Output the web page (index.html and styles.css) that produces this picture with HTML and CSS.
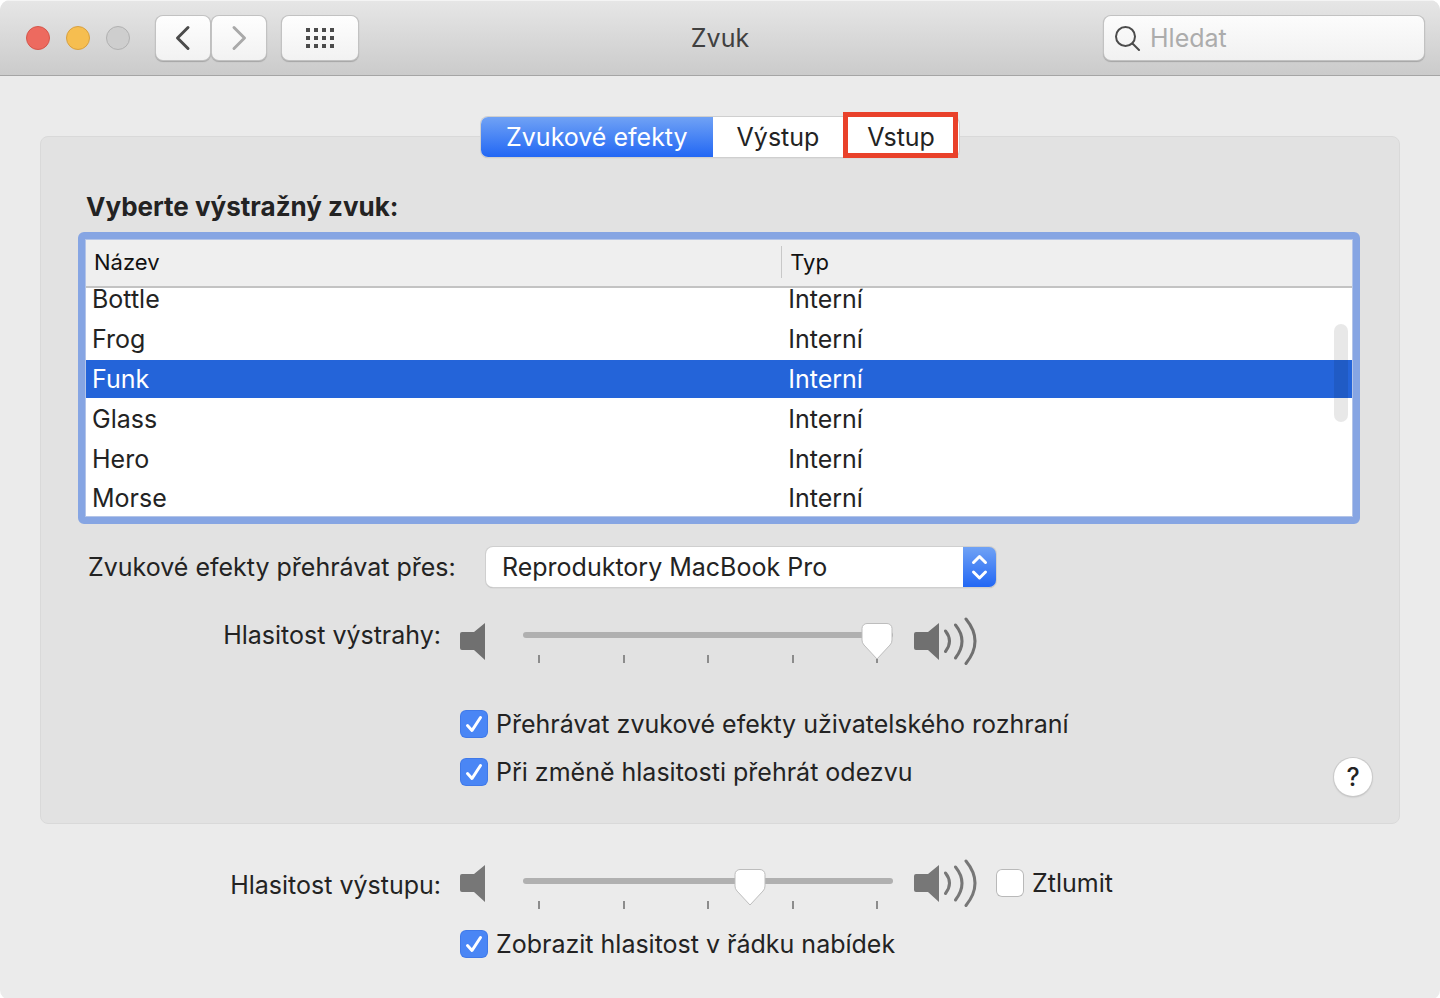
FILE: index.html
```html
<!DOCTYPE html>
<html lang="cs">
<head>
    <meta charset="UTF-8">
    <meta name="viewport" content="width=device-width, initial-scale=1.0">
    <title>Zvuk</title>
    <link rel="stylesheet" href="styles.css">
</head>
<body>

    <div class="window">
        <header class="toolbar">
            <div class="toolbar-left">
                <div class="lights">
                    <button type="button" class="light red" aria-label="Zavřít"></button>
                    <button type="button" class="light yellow" aria-label="Minimalizovat"></button>
                    <button type="button" class="light" aria-label="Zvětšit" disabled></button>
                </div>
                <div class="nav">
                    <button type="button" class="tool" aria-label="Zpět">
                        <svg width="16" height="26" viewBox="0 0 16 26" fill="none" stroke="#4b4b4b" stroke-width="3" stroke-linecap="round" stroke-linejoin="round"><path d="M13 2.5 2.5 13 13 23.5"/></svg>
                    </button>
                    <button type="button" class="tool" aria-label="Vpřed">
                        <svg width="16" height="26" viewBox="0 0 16 26" fill="none" stroke="#a9a9a9" stroke-width="3" stroke-linecap="round" stroke-linejoin="round"><path d="M3 2.5 13.5 13 3 23.5"/></svg>
                    </button>
                </div>
                <button type="button" class="tool wide" aria-label="Zobrazit vše">
                    <svg width="28" height="20" viewBox="0 0 28 20" fill="#4b4b4b">
                        <path d="M0 0h4v4H0zM8 0h4v4H8zM16 0h4v4h-4zM24 0h4v4h-4zM0 8h4v4H0zM8 8h4v4H8zM16 8h4v4h-4zM24 8h4v4h-4zM0 16h4v4H0zM8 16h4v4H8zM16 16h4v4h-4zM24 16h4v4h-4z"/>
                    </svg>
                </button>
            </div>
            <h1 class="title">Zvuk</h1>
            <div class="search">
                <svg width="26" height="26" viewBox="0 0 26 26" fill="none" stroke="#4b4b4b" stroke-width="2" stroke-linecap="round"><circle cx="10.500" cy="11.500" r="9.500"/><path d="M17.500 18.500 24 25"/></svg>
                <input type="search" aria-label="Hledat" placeholder="Hledat">
            </div>
        </header>

        <main class="content">
            <div class="tabs" role="tablist">
                <button type="button" class="tab active" role="tab" aria-selected="true">Zvukové efekty</button>
                <button type="button" class="tab" role="tab" aria-selected="false">Výstup</button>
                <button type="button" class="tab marked" role="tab" aria-selected="false">Vstup</button>
            </div>

            <section class="panel">
                <h2 class="heading" id="listTitle">Vyberte výstražný zvuk:</h2>
                <div class="list" tabindex="0">
                    <table aria-labelledby="listTitle">
                        <thead>
                            <tr><th>Název</th><th><span class="divider">Typ</span></th></tr>
                        </thead>
                        <tbody>
                            <tr class="first"><td>Bottle</td><td>Interní</td></tr>
                            <tr><td>Frog</td><td>Interní</td></tr>
                            <tr class="selected"><td>Funk</td><td>Interní</td></tr>
                            <tr><td>Glass</td><td>Interní</td></tr>
                            <tr><td>Hero</td><td>Interní</td></tr>
                            <tr><td>Morse</td><td>Interní</td></tr>
                        </tbody>
                    </table>
                    <div class="scrollbar"></div>
                </div>

                <div class="device">
                    <label for="device">Zvukové efekty přehrávat přes:</label>
                    <select id="device">
                        <option>Reproduktory MacBook Pro</option>
                    </select>
                </div>

                <div class="volume alert">
                    <label class="volume-label" for="alertVolume">Hlasitost výstrahy:</label>
                    <svg class="quiet" width="26" height="48" viewBox="0 0 26 48" fill="#707070"><path d="M2 15h12L25 6v37L14 33H2a2 2 0 0 1-2-2V17a2 2 0 0 1 2-2z"/></svg>
                    <div class="slider">
                        <div class="ticks"><span></span><span></span><span></span><span></span><span></span></div>
                        <input type="range" id="alertVolume" min="0" max="1000" value="1000">
                    </div>
                    <svg class="loud" width="64" height="48" viewBox="0 0 64 48" fill="#707070">
                        <path d="M2 15h12L25 6v37L14 33H2a2 2 0 0 1-2-2V17a2 2 0 0 1 2-2z"/>
                        <path d="M31.500 14q8 10 0 20.500M41.500 8q13 16 0 33M52 2q18 22 0 44.500" fill="none" stroke="#707070" stroke-width="3" stroke-linecap="round"/>
                    </svg>
                </div>

                <div class="bottom">
                    <div class="options">
                        <label class="check"><input type="checkbox" checked>Přehrávat zvukové efekty uživatelského rozhraní</label>
                        <label class="check"><input type="checkbox" checked>Při změně hlasitosti přehrát odezvu</label>
                    </div>
                    <button type="button" class="help" aria-label="Nápověda">?</button>
                </div>
            </section>

            <section class="output">
                <div class="volume">
                    <label class="volume-label" for="outputVolume">Hlasitost výstupu:</label>
                    <svg class="quiet" width="26" height="48" viewBox="0 0 26 48" fill="#777"><path d="M2 15h12L25 6v37L14 33H2a2 2 0 0 1-2-2V17a2 2 0 0 1 2-2z"/></svg>
                    <div class="slider">
                        <div class="ticks"><span></span><span></span><span></span><span></span><span></span></div>
                        <input type="range" id="outputVolume" min="0" max="1000" value="624">
                    </div>
                    <svg class="loud" width="64" height="48" viewBox="0 0 64 48" fill="#777">
                        <path d="M2 15h12L25 6v37L14 33H2a2 2 0 0 1-2-2V17a2 2 0 0 1 2-2z"/>
                        <path d="M31.500 14q8 10 0 20.500M41.500 8q13 16 0 33M52 2q18 22 0 44.500" fill="none" stroke="#777" stroke-width="3" stroke-linecap="round"/>
                    </svg>
                    <label class="check mute"><input type="checkbox">Ztlumit</label>
                </div>
                <div class="options">
                    <label class="check"><input type="checkbox" checked>Zobrazit hlasitost v řádku nabídek</label>
                </div>
            </section>
        </main>
    </div>

</body>
</html>
```

FILE: styles.css
```css
* {
    box-sizing: border-box;
}
body {
    margin: 0;
    background-color: #fff;
    color: #232323;
    font-family: Inter, "Liberation Sans", sans-serif;
    font-size: 25px;
    line-height: 32px;
}
button, input, select {
    font: inherit;
    color: inherit;
    margin: 0;
}
button {
    border: none;
    padding: 0;
}
svg {
    display: block;
    flex: none;
}
.window {
    min-height: 100vh;
    background-color: #ebebeb;
    border-radius: 10px;
    overflow: hidden;
}

/* toolbar */
.toolbar {
    display: grid;
    grid-template-columns: 1fr auto 1fr;
    align-items: center;
    height: 76px;
    padding: 0 16px;
    background: linear-gradient(#e6e6e6, #cbcbcb);
    border-top: 1px solid #f4f4f4;
    border-bottom: 1px solid #a5a5a5;
}
.toolbar-left {
    display: flex;
    align-items: center;
    gap: 16px;
    padding-left: 10px;
}
.lights {
    display: flex;
    gap: 16px;
    margin-right: 10px;
}
.light {
    width: 24px;
    height: 24px;
    border: 1px solid #b1b1b1;
    border-radius: 50%;
    background-color: #cecece;
}
.light.red {
    background-color: #ed6a5f;
    border-color: #d5564b;
}
.light.yellow {
    background-color: #f6be50;
    border-color: #d8a040;
}
.nav {
    display: flex;
    gap: 2px;
}
.tool {
    display: flex;
    align-items: center;
    justify-content: center;
    width: 54px;
    height: 44px;
    border-radius: 7px;
    background: linear-gradient(#fefefe, #f2f2f2);
    box-shadow: 0 0 0 1px #c2c2c2, 0 1px 1px 1px #a5a5a5;
}
.tool.wide {
    width: 76px;
}
.title {
    margin: 0;
    font-size: 25px;
    font-weight: 400;
    color: #404040;
}
.search {
    justify-self: end;
    display: flex;
    align-items: center;
    gap: 9px;
    width: 320px;
    height: 44px;
    padding: 0 11px;
    border-radius: 7px;
    background: linear-gradient(#fcfcfc, #f1f1f1);
    box-shadow: 0 0 0 1px #c2c2c2, 0 1px 1px 1px #a5a5a5;
}
.search input {
    flex: 1;
    min-width: 0;
    padding: 0;
    border: none;
    background: none;
    outline: none;
}
.search input::placeholder {
    color: #acacac;
}

/* tabs */
.content {
    padding: 41px 40px 40px;
}
.tabs {
    position: relative;
    z-index: 1;
    display: flex;
    width: max-content;
    height: 40px;
    margin: 0 auto;
    border-radius: 7px;
    background-color: #fff;
    box-shadow: 0 0 0 1px #cfcfcf, 0 1px 1px #aaa;
}
.tab {
    position: relative;
    padding: 0 24px;
    background: none;
}
.tab.active {
    padding: 0 25px;
    color: #fff;
    background: linear-gradient(#70a2f5, #2267f4);
    border-radius: 7px 0 0 7px;
}
.tab.marked::after {
    content: "";
    position: absolute;
    inset: -5px 1px -1px 0;
    border: 5px solid #e9412a;
}

/* panel */
.panel {
    margin-top: -21px;
    padding: 54px 39px 27px 37px;
    background-color: #e2e2e2;
    border: 1px solid #d9d9d9;
    border-radius: 8px;
}
.heading {
    margin: 0 0 9px 8px;
    font-size: 26px;
    font-weight: 700;
    line-height: 32px;
}
.list {
    position: relative;
    padding: 1px;
    border: 7px solid #86a5e3;
    border-radius: 6px;
    background-color: #b3c4e8;
    outline: none;
}
.list table {
    width: 100%;
    border-spacing: 0;
    table-layout: fixed;
    background-color: #fff;
}
.list th {
    width: 45%;
    height: 48px;
    padding: 0 0 2px;
    text-align: left;
    font-size: 22px;
    font-weight: 400;
    color: #111;
    background-color: #efefef;
    border-bottom: 2px solid #c3c3c3;
}
.list th:first-child {
    width: 55%;
    padding-left: 8px;
}
.divider {
    display: block;
    margin-left: -1px;
    padding-left: 8px;
    border-left: 1px solid #c8c8c8;
}
.list td {
    height: 40px;
    padding: 0 6px;
    line-height: 38px;
    border-bottom: 2px solid #fff;
}
.list .first td {
    height: 32px;
    line-height: 22px;
    vertical-align: top;
}
.list tr:last-child td {
    height: 36px;
    line-height: 36px;
    padding-bottom: 0;
    border-bottom: none;
}
.list .selected td {
    color: #fff;
    background-color: #2464d9;
}
.scrollbar {
    position: absolute;
    top: 85px;
    right: 5px;
    width: 14px;
    height: 98px;
    border-radius: 7px;
    background-color: rgba(0, 0, 0, 0.09);
}

/* sound device */
.device {
    display: flex;
    align-items: center;
    margin: 23px 0 0 10px;
}
.device label {
    width: 398px;
}
.device select {
    width: 510px;
    height: 40px;
    padding: 0 44px 0 16px;
    appearance: none;
    border: none;
    border-radius: 7px;
    background:
        url("data:image/svg+xml,%3Csvg xmlns='http://www.w3.org/2000/svg' width='33' height='40' fill='none' stroke='white' stroke-width='3' stroke-linecap='round' stroke-linejoin='round'%3E%3Cpath d='M10.500 15.500 16.500 9.500 22.500 15.500M10.500 25 16.500 31 22.500 25'/%3E%3C/svg%3E") right / 33px 40px no-repeat,
        linear-gradient(#70a2f5, #2267f4) right / 33px 40px no-repeat,
        #fff;
    box-shadow: 0 0 0 1px #cfcfcf, 0 1px 1px #999;
}

/* volume sliders */
.volume {
    display: flex;
    align-items: center;
}
.alert {
    margin-top: 30px;
}
.volume-label {
    width: 363px;
    text-align: right;
}
.alert .volume-label {
    padding-bottom: 12px;
}
.output .volume-label {
    padding-top: 4px;
}
.quiet {
    margin: 0 37px 0 19px;
}
.loud {
    margin-left: 21px;
}
.slider {
    display: grid;
    width: 370px;
    padding-top: 4px;
}
.output .slider {
    padding-top: 12px;
}
.slider > * {
    grid-area: 1 / 1;
}
.slider input {
    width: 100%;
    height: 24px;
    appearance: none;
    background: none;
    outline: none;
}
.slider input::-webkit-slider-runnable-track {
    height: 6px;
    border-radius: 3px;
    background-color: #b0b0b0;
}
.slider input::-webkit-slider-thumb {
    appearance: none;
    width: 32px;
    height: 38px;
    margin-top: -10px;
    background: url("data:image/svg+xml,%3Csvg xmlns='http://www.w3.org/2000/svg' width='32' height='38'%3E%3Cpath d='M6 1.500h20a5 5 0 0 1 5 5V18q0 3-2 5L16 37 3 23q-2-2-2-5V6.500a5 5 0 0 1 5-5z' fill='white' stroke='%23bdbdbd'/%3E%3C/svg%3E") no-repeat;
}
.ticks {
    display: flex;
    align-items: flex-end;
    justify-content: space-between;
    height: 40px;
    padding: 0 15px;
}
.ticks span {
    width: 2px;
    height: 8px;
    background-color: #8c8c8c;
}

/* checkboxes */
.bottom {
    display: flex;
    justify-content: space-between;
    align-items: flex-end;
    margin-top: 43px;
}
.options {
    display: grid;
    gap: 16px;
    margin-left: 382px;
}
.bottom .options {
    padding-bottom: 8px;
}
.check {
    display: flex;
    align-items: center;
    gap: 8px;
}
.check input {
    width: 28px;
    height: 28px;
    appearance: none;
    border-radius: 6px;
    background-color: #fff;
    box-shadow: inset 0 0 0 1px #b9b9b9;
}
.check input:checked {
    background: #4a86f5 url("data:image/svg+xml,%3Csvg xmlns='http://www.w3.org/2000/svg' width='28' height='28' fill='none' stroke='white' stroke-width='3' stroke-linecap='round' stroke-linejoin='round'%3E%3Cpath d='M7.500 15.500 12 20.500 20.500 7.500'/%3E%3C/svg%3E");
    box-shadow: inset 0 0 0 1px #4079e8;
}
.help {
    width: 38px;
    height: 38px;
    margin-right: -12px;
    border-radius: 50%;
    background-color: #fff;
    font-weight: 500;
    box-shadow: 0 0 0 1px #cacaca, 0 1px 2px #aaa;
}

/* output volume */
.output {
    padding: 33px 0 0 38px;
}
.mute {
    margin-left: 18px;
}
.output .options {
    margin-top: 19px;
}
```
